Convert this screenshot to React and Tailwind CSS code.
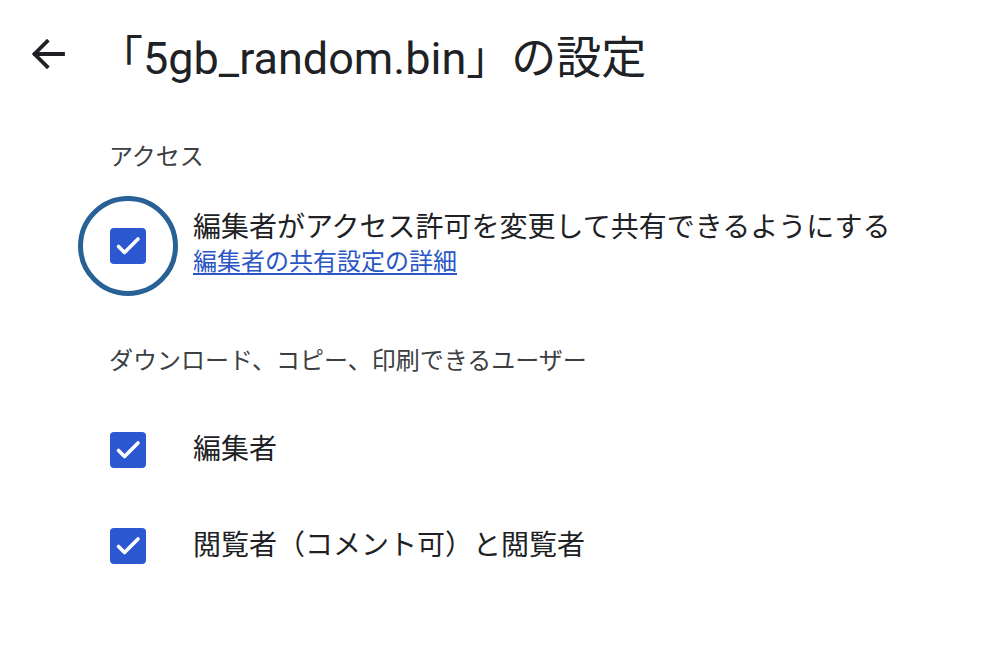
import React from 'react';

const font = { fontFamily: "Roboto, 'Noto Sans CJK JP', sans-serif" };

const Check = () => (
  <div className="h-[36px] w-[36px] rounded-[4px] bg-[#2b57d0]">
    <svg width="36" height="36" viewBox="0 0 36 36" fill="none">
      <path d="M8.5 18.5l6 6L28 11" stroke="white" strokeWidth="3.6" strokeLinecap="round" strokeLinejoin="round" />
    </svg>
  </div>
);

export default function App() {
  return (
    <div className="h-[660px] w-[1000px] bg-white text-[#202124]" style={font}>
      {/* Header */}
      <div className="flex h-[108px] items-center">
        <div className="ml-[28px] flex h-[40px] w-[40px] items-center justify-center">
          <svg width="40" height="40" viewBox="0 0 40 40" fill="none">
            <path d="M35 20H7M19 7.5L6.5 20 19 32.5" stroke="#202124" strokeWidth="3.8" strokeLinecap="square" />
          </svg>
        </div>
        <h1 className="ml-[30px] pt-[8px] text-[45px] leading-none font-normal">「5gb_random.bin」の設定</h1>
      </div>

      <div className="pl-[109px]">
        <div className="pt-[34px] text-[24px] leading-[30px] text-[#3c4043]">アクセス</div>

        <div className="mt-[24px] flex items-center">
          <div className="-ml-[31px] flex h-[100px] w-[100px] items-center justify-center rounded-full border-[5px] border-[#286196]">
            <Check />
          </div>
          <div className="ml-[15px] pb-[2px]">
            <div className="text-[28px] leading-[34px]">編集者がアクセス許可を変更して共有できるようにする</div>
            <a href="#" className="block text-[24px] leading-[34px] text-[#2a56c6] underline underline-offset-[3px]">編集者の共有設定の詳細</a>
          </div>
        </div>

        <div className="mt-[48px] text-[24px] leading-[34px] text-[#3c4043]">ダウンロード、コピー、印刷できるユーザー</div>

        <div className="mt-[54px] flex items-center">
          <div className="ml-[1px]"><Check /></div>
          <div className="ml-[47px] text-[28px] leading-[36px]">編集者</div>
        </div>
        <div className="mt-[60px] flex items-center">
          <div className="ml-[1px]"><Check /></div>
          <div className="ml-[47px] text-[28px] leading-[36px]">閲覧者（コメント可）と閲覧者</div>
        </div>
      </div>
    </div>
  );
}
